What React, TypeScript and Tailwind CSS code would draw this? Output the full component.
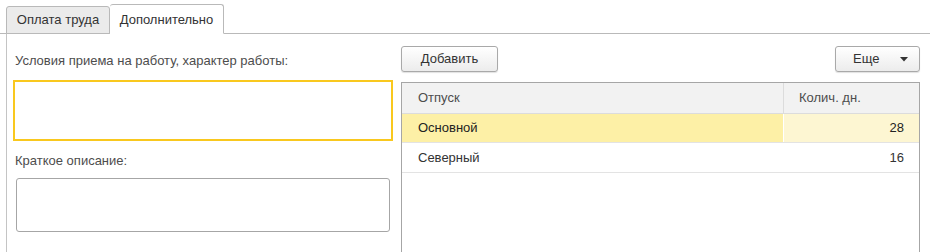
import React from "react";

export default function App() {
  return (
    <div className="w-[930px] h-[252px] bg-white overflow-hidden font-['Liberation_Sans',Arial,sans-serif] text-[13px] text-[#333]">
      {/* tabs */}
      <div className="flex items-end h-[34px] pl-[6px] border-b border-[#b9b9b9]">
        <div className="h-[28px] w-[104px] mb-[-1px] flex items-center justify-center bg-[#ebebeb] border border-[#b9b9b9] rounded-t-[3px] text-[#333]">
          Оплата труда
        </div>
        <div className="h-[30px] w-[114px] mb-[-1px] flex items-center justify-center bg-white border border-[#b9b9b9] border-b-white border-l-0 rounded-t-[3px] text-[#333] pt-[1px]">
          Дополнительно
        </div>
      </div>
      {/* content */}
      <div className="ml-[6px] border-l border-[#c4c4c4] h-[240px] flex pl-[6px] pt-[12px]">
        {/* left column */}
        <div className="w-[380px] flex flex-col">
          <div className="h-[30px] flex items-center pl-[2px] text-[#4d4d4d]">
            Условия приема на работу, характер работы:
          </div>
          <div className="mt-[4px] h-[61px] border-2 border-[#f9c81e] bg-white" />
          <div className="h-[37px] flex items-center pt-[3px] pl-[2px] text-[#4d4d4d]">
            Краткое описание:
          </div>
          <div className="mx-[3px] h-[54px] border border-[#a6a6a6] rounded-[3px] bg-white" />
        </div>
        {/* right column */}
        <div className="ml-[8px] w-[519px] flex flex-col">
          <div className="flex justify-between h-[26px]">
            <button className="w-[97px] h-[26px] border border-[#a9a9a9] rounded-[3px] bg-gradient-to-b from-white to-[#ececec] shadow-[0_1px_1px_rgba(0,0,0,0.12)] text-[#333] flex items-center justify-center">
              Добавить
            </button>
            <button className="w-[85px] h-[26px] border border-[#a9a9a9] rounded-[3px] bg-gradient-to-b from-white to-[#ececec] shadow-[0_1px_1px_rgba(0,0,0,0.12)] text-[#333] flex items-center pl-[17px]">
              <span>Еще</span>
              <svg width="8" height="5" viewBox="0 0 8 5" className="ml-[21px]">
                <path d="M0 0 L8 0 L4 4.5 Z" fill="#333" />
              </svg>
            </button>
          </div>
          <div className="mt-[10px] border border-[#a6a6a6] flex-1 flex flex-col">
            <div className="flex h-[31px] bg-[#f2f2f2] border-b border-[#dcdcdc] text-[#4d4d4d]">
              <div className="w-[382px] border-r border-[#dcdcdc] flex items-center pl-[16px]">Отпуск</div>
              <div className="flex-1 flex items-center pl-[15px]">Колич. дн.</div>
            </div>
            <div className="flex h-[29px] border-b border-[#e3e3e3] text-[#222]">
              <div className="w-[382px] border-r border-white bg-[#fdf0a6] flex items-center pl-[16px]">Основной</div>
              <div className="flex-1 bg-[#fdf6d2] flex items-center justify-end pr-[15px]">28</div>
            </div>
            <div className="flex h-[30px] border-b border-[#e3e3e3] text-[#333]">
              <div className="w-[382px] flex items-center pl-[16px]">Северный</div>
              <div className="flex-1 flex items-center justify-end pr-[15px]">16</div>
            </div>
          </div>
        </div>
      </div>
    </div>
  );
}
